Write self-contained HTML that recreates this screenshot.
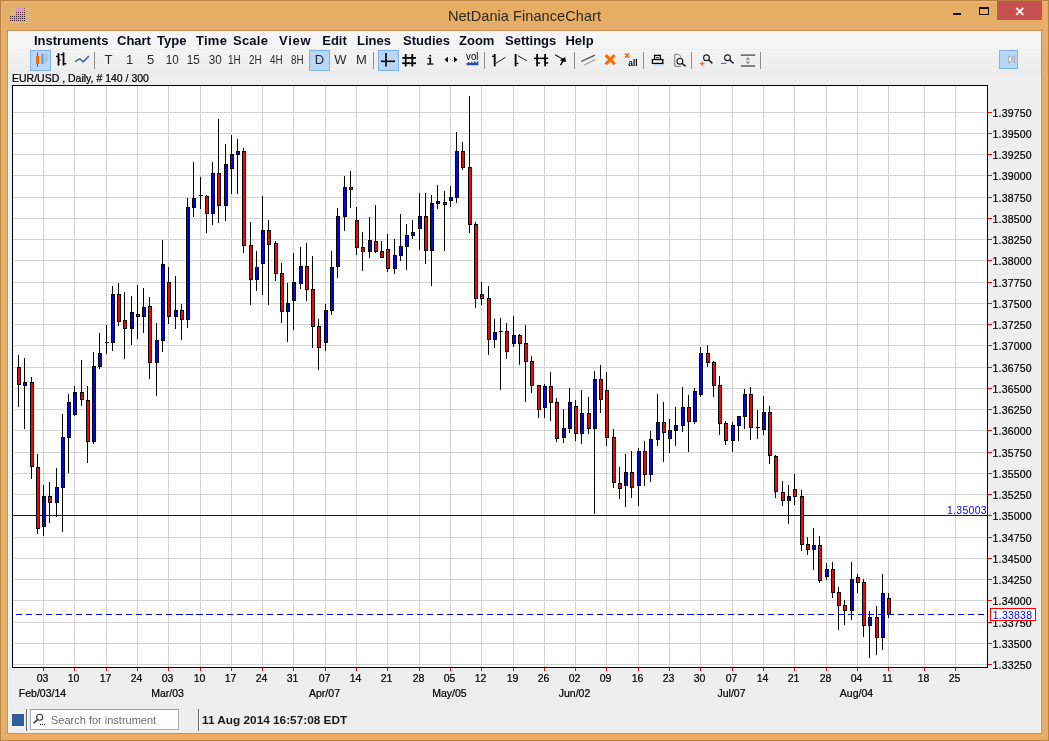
<!DOCTYPE html>
<html><head><meta charset="utf-8"><title>NetDania FinanceChart</title>
<style>
html,body{margin:0;padding:0}
body{width:1049px;height:741px;overflow:hidden;background:#E6AD64;font-family:"Liberation Sans",sans-serif;position:relative}
#win{position:absolute;left:0;top:0;width:1049px;height:741px;overflow:hidden;will-change:transform}
.fl{position:absolute}
#content{position:absolute;left:8px;top:31px;width:1033px;height:702px;background:#eeeeee}
#menubar{position:absolute;left:8px;top:31px;width:1033px;height:19px;background:#f5f5f5}
#toolbar{position:absolute;left:8px;top:50px;width:1033px;height:24px;background:linear-gradient(#f3f3f3,#ececec)}
#title{position:absolute;left:0;top:5px;letter-spacing:0.08px;width:1049px;text-align:center;font-size:14.5px;color:#2e2a22;line-height:22px;white-space:nowrap}
.mi{position:absolute;top:32px;height:17px;line-height:17px;font-size:13px;font-weight:bold;color:#0b0b1e;white-space:nowrap;text-align:center}
.mi span{display:inline-block}
.tb{position:absolute;top:50px;width:21px;height:21px;line-height:21px;text-align:center;font-size:13px;color:#2a2a2a;box-sizing:border-box;white-space:nowrap}
.tb span{display:inline-block;position:relative;top:-0.6px}
.tb .t2{left:0.5px;transform:scaleX(0.9);transform-origin:50% 50%;margin:0 -4px}
.tb .t_1H,.tb .t_2H,.tb .t_4H,.tb .t_8H{left:-1.2px;transform:scaleX(0.76)}
.sel{background:#b9d7f4;border:1px solid #7fb2e5}
.sel span{position:relative;top:-1.6px}
.sep{position:absolute;top:52px;width:1px;height:17px;background:#8a8a8a}
#clabel{position:absolute;left:12px;top:72px;font-size:10.5px;line-height:12px;color:#000;white-space:nowrap}
.pl{position:absolute;left:992.5px;width:46px;letter-spacing:0.2px;font-size:10.5px;line-height:12px;color:#000;white-space:nowrap}
.dl{position:absolute;top:672px;width:41px;text-align:center;font-size:10.5px;line-height:12px;color:#000}
.ml{position:absolute;top:687px;width:81px;text-align:center;font-size:10.5px;line-height:12px;color:#000;white-space:nowrap}
#hl{position:absolute;left:900px;width:87px;text-align:right;top:504px;letter-spacing:0.3px;font-size:10.5px;line-height:12px;color:#0000f0}
#lp{position:absolute;left:990px;top:608px;width:46px;height:13px;border:1px solid #ff0000;background:#fff;box-sizing:border-box;font-size:10.5px;line-height:12px;color:#0000f0;text-align:center;letter-spacing:0.2px;padding-right:1px}
#sq{position:absolute;left:12px;top:714px;width:12px;height:12px;background:#2f5f9e}
.ssep{position:absolute;top:709px;width:1px;height:22px;background:#666;box-shadow:1px 0 0 #fafafa}
#search{position:absolute;left:30px;top:709px;width:149px;height:21px;box-sizing:border-box;border:1px solid #abadb3;background:#fff;border-top-color:#9a9ca3}
#search span{position:absolute;left:20px;top:4px;font-size:11px;line-height:13px;color:#6e6e6e;white-space:nowrap}
#date{position:absolute;left:202px;top:713px;font-size:11.8px;font-weight:bold;line-height:14px;color:#1a1a1a;white-space:nowrap}
#closeb{position:absolute;left:997px;top:1px;width:45px;height:19px;background:#c75050}
.pl,.dl,.ml,#clabel{-webkit-text-stroke:0.22px #000}
</style></head><body>
<div id="win">
<div class="fl" style="left:0;top:0;width:1049px;height:1px;background:#b9803e"></div>
<div class="fl" style="left:0;top:1px;width:1049px;height:2px;background:#ebb275"></div>
<div class="fl" style="left:0;top:0;width:1px;height:741px;background:#b9803e"></div>
<div class="fl" style="left:1px;top:1px;width:2px;height:739px;background:#e3b274"></div>
<div class="fl" style="left:6px;top:3px;width:1px;height:735px;background:#e0b273"></div>
<div class="fl" style="left:1042px;top:3px;width:2px;height:735px;background:#f0aa5e"></div>
<div class="fl" style="left:1044px;top:3px;width:3px;height:735px;background:#e2b170"></div>
<div class="fl" style="left:0;top:0;width:1049px;height:1px;background:#b9803e"></div>
<div class="fl" style="left:1048px;top:0;width:1px;height:741px;background:#b9803e"></div>
<div class="fl" style="left:0;top:740px;width:1049px;height:1px;background:#b9803e"></div>
<div class="fl" style="left:7px;top:26px;width:1035px;height:1px;background:#dfb47c"></div>
<div class="fl" style="left:7px;top:27px;width:1035px;height:3px;background:#f3aa5d"></div>
<div class="fl" style="left:7px;top:30px;width:1035px;height:704px;background:#c4935a"></div>
<div class="fl" style="left:7px;top:734px;width:1035px;height:3px;background:#f0aa5e"></div>
<div id="title">NetDania FinanceChart</div>
<div id="closeb"></div>
<div id="content"></div>
<div class="fl" style="left:8px;top:31px;width:1px;height:702px;background:#f6f8fb"></div>
<div class="fl" style="left:1040px;top:31px;width:1px;height:702px;background:#faf8ee"></div>
<div id="menubar"></div>
<div id="toolbar"></div>
<div class="fl" style="left:9px;top:49px;width:1031px;height:1px;background:#ececec"></div>
<div class="fl" style="left:9px;top:50px;width:1031px;height:1px;background:#f6f6f6"></div>
<span class="mi" style="left:34px;width:73px"><span style="">Instruments</span></span><span class="mi" style="left:117px;width:69px"><span style="word-spacing:2.5px">Chart Type</span></span><span class="mi" style="left:196px;width:72px"><span style="word-spacing:2px;letter-spacing:0.25px">Time Scale</span></span><span class="mi" style="left:279px;width:32px"><span style="letter-spacing:0.7px">View</span></span><span class="mi" style="left:322px;width:25px"><span style="">Edit</span></span><span class="mi" style="left:357px;width:34px"><span style="">Lines</span></span><span class="mi" style="left:403px;width:46px"><span style="">Studies</span></span><span class="mi" style="left:459px;width:35px"><span style="">Zoom</span></span><span class="mi" style="left:505px;width:50px"><span style="">Settings</span></span><span class="mi" style="left:565px;width:29px"><span style="">Help</span></span>
<div class="tb sel" style="left:30px"></div>
<div class="tb" style="left:98px"><span class="t1 t_T">T</span></div><div class="tb" style="left:119px"><span class="t1 t_1">1</span></div><div class="tb" style="left:140px"><span class="t1 t_5">5</span></div><div class="tb" style="left:161px"><span class="t2 t_10">10</span></div><div class="tb" style="left:182px"><span class="t2 t_15">15</span></div><div class="tb" style="left:204px"><span class="t2 t_30">30</span></div><div class="tb" style="left:225px"><span class="t2 t_1H">1H</span></div><div class="tb" style="left:246px"><span class="t2 t_2H">2H</span></div><div class="tb" style="left:267px"><span class="t2 t_4H">4H</span></div><div class="tb" style="left:288px"><span class="t2 t_8H">8H</span></div><div class="tb sel" style="left:309px"><span class="t1 t_D">D</span></div><div class="tb" style="left:330px"><span class="t1 t_W">W</span></div><div class="tb" style="left:351px"><span class="t1 t_M">M</span></div>
<div class="tb sel" style="left:378px"></div>
<div class="tb sel" style="left:999px;width:19px;height:19px"></div>
<div class="sep" style="left:94px"></div><div class="sep" style="left:373px"></div><div class="sep" style="left:484px"></div><div class="sep" style="left:574px"></div><div class="sep" style="left:643px"></div><div class="sep" style="left:691px"></div><div class="sep" style="left:760px"></div>
<div id="clabel">EUR/USD , Daily, # 140 / 300</div>
<svg id="chart" width="1049" height="741" viewBox="0 0 1049 741" shape-rendering="crispEdges" style="position:absolute;left:0;top:0"><rect x="12" y="85" width="976" height="583" fill="#fff"/><rect x="43" y="86" width="1" height="581" fill="#d3d3d3"/><rect x="74" y="86" width="1" height="581" fill="#d3d3d3"/><rect x="106" y="86" width="1" height="581" fill="#d3d3d3"/><rect x="137" y="86" width="1" height="581" fill="#d3d3d3"/><rect x="168" y="86" width="1" height="581" fill="#d3d3d3"/><rect x="200" y="86" width="1" height="581" fill="#d3d3d3"/><rect x="231" y="86" width="1" height="581" fill="#d3d3d3"/><rect x="262" y="86" width="1" height="581" fill="#d3d3d3"/><rect x="293" y="86" width="1" height="581" fill="#d3d3d3"/><rect x="325" y="86" width="1" height="581" fill="#d3d3d3"/><rect x="356" y="86" width="1" height="581" fill="#d3d3d3"/><rect x="387" y="86" width="1" height="581" fill="#d3d3d3"/><rect x="419" y="86" width="1" height="581" fill="#d3d3d3"/><rect x="450" y="86" width="1" height="581" fill="#d3d3d3"/><rect x="481" y="86" width="1" height="581" fill="#d3d3d3"/><rect x="513" y="86" width="1" height="581" fill="#d3d3d3"/><rect x="544" y="86" width="1" height="581" fill="#d3d3d3"/><rect x="575" y="86" width="1" height="581" fill="#d3d3d3"/><rect x="606" y="86" width="1" height="581" fill="#d3d3d3"/><rect x="638" y="86" width="1" height="581" fill="#d3d3d3"/><rect x="669" y="86" width="1" height="581" fill="#d3d3d3"/><rect x="700" y="86" width="1" height="581" fill="#d3d3d3"/><rect x="732" y="86" width="1" height="581" fill="#d3d3d3"/><rect x="763" y="86" width="1" height="581" fill="#d3d3d3"/><rect x="794" y="86" width="1" height="581" fill="#d3d3d3"/><rect x="826" y="86" width="1" height="581" fill="#d3d3d3"/><rect x="857" y="86" width="1" height="581" fill="#d3d3d3"/><rect x="888" y="86" width="1" height="581" fill="#d3d3d3"/><rect x="924" y="86" width="1" height="581" fill="#d3d3d3"/><rect x="955" y="86" width="1" height="581" fill="#d3d3d3"/><rect x="13" y="112" width="974" height="1" fill="#d3d3d3"/><rect x="13" y="133" width="974" height="1" fill="#d3d3d3"/><rect x="13" y="154" width="974" height="1" fill="#d3d3d3"/><rect x="13" y="175" width="974" height="1" fill="#d3d3d3"/><rect x="13" y="197" width="974" height="1" fill="#d3d3d3"/><rect x="13" y="218" width="974" height="1" fill="#d3d3d3"/><rect x="13" y="239" width="974" height="1" fill="#d3d3d3"/><rect x="13" y="260" width="974" height="1" fill="#d3d3d3"/><rect x="13" y="282" width="974" height="1" fill="#d3d3d3"/><rect x="13" y="303" width="974" height="1" fill="#d3d3d3"/><rect x="13" y="324" width="974" height="1" fill="#d3d3d3"/><rect x="13" y="345" width="974" height="1" fill="#d3d3d3"/><rect x="13" y="367" width="974" height="1" fill="#d3d3d3"/><rect x="13" y="388" width="974" height="1" fill="#d3d3d3"/><rect x="13" y="409" width="974" height="1" fill="#d3d3d3"/><rect x="13" y="430" width="974" height="1" fill="#d3d3d3"/><rect x="13" y="452" width="974" height="1" fill="#d3d3d3"/><rect x="13" y="473" width="974" height="1" fill="#d3d3d3"/><rect x="13" y="494" width="974" height="1" fill="#d3d3d3"/><rect x="13" y="515" width="974" height="1" fill="#d3d3d3"/><rect x="13" y="537" width="974" height="1" fill="#d3d3d3"/><rect x="13" y="558" width="974" height="1" fill="#d3d3d3"/><rect x="13" y="579" width="974" height="1" fill="#d3d3d3"/><rect x="13" y="600" width="974" height="1" fill="#d3d3d3"/><rect x="13" y="622" width="974" height="1" fill="#d3d3d3"/><rect x="13" y="643" width="974" height="1" fill="#d3d3d3"/><rect x="13" y="664" width="974" height="1" fill="#d3d3d3"/><rect x="13" y="515" width="974" height="1" fill="#0000f0"/><rect x="18" y="355" width="1" height="52" fill="#000"/><rect x="17" y="367" width="4" height="18" fill="#000"/><rect x="18" y="368" width="2" height="16" fill="#ff0000"/><rect x="24" y="358" width="1" height="71" fill="#000"/><rect x="23" y="382" width="4" height="4" fill="#000"/><rect x="24" y="383" width="2" height="2" fill="#0000ff"/><rect x="31" y="377" width="1" height="102" fill="#000"/><rect x="30" y="382" width="4" height="85" fill="#000"/><rect x="31" y="383" width="2" height="83" fill="#ff0000"/><rect x="37" y="454" width="1" height="80" fill="#000"/><rect x="36" y="467" width="4" height="62" fill="#000"/><rect x="37" y="468" width="2" height="60" fill="#ff0000"/><rect x="43" y="485" width="1" height="51" fill="#000"/><rect x="42" y="496" width="4" height="31" fill="#000"/><rect x="43" y="497" width="2" height="29" fill="#0000ff"/><rect x="49" y="482" width="1" height="41" fill="#000"/><rect x="48" y="496" width="4" height="7" fill="#000"/><rect x="49" y="497" width="2" height="5" fill="#ff0000"/><rect x="56" y="468" width="1" height="49" fill="#000"/><rect x="55" y="487" width="4" height="16" fill="#000"/><rect x="56" y="488" width="2" height="14" fill="#0000ff"/><rect x="62" y="414" width="1" height="118" fill="#000"/><rect x="61" y="437" width="4" height="51" fill="#000"/><rect x="62" y="438" width="2" height="49" fill="#0000ff"/><rect x="68" y="394" width="1" height="79" fill="#000"/><rect x="67" y="402" width="4" height="36" fill="#000"/><rect x="68" y="403" width="2" height="34" fill="#0000ff"/><rect x="74" y="386" width="1" height="30" fill="#000"/><rect x="73" y="392" width="4" height="23" fill="#000"/><rect x="74" y="393" width="2" height="21" fill="#0000ff"/><rect x="81" y="360" width="1" height="46" fill="#000"/><rect x="80" y="392" width="4" height="8" fill="#000"/><rect x="81" y="393" width="2" height="6" fill="#ff0000"/><rect x="87" y="386" width="1" height="77" fill="#000"/><rect x="86" y="400" width="4" height="42" fill="#000"/><rect x="87" y="401" width="2" height="40" fill="#ff0000"/><rect x="93" y="352" width="1" height="92" fill="#000"/><rect x="92" y="366" width="4" height="76" fill="#000"/><rect x="93" y="367" width="2" height="74" fill="#0000ff"/><rect x="99" y="333" width="1" height="36" fill="#000"/><rect x="98" y="353" width="4" height="14" fill="#000"/><rect x="99" y="354" width="2" height="12" fill="#0000ff"/><rect x="106" y="325" width="1" height="29" fill="#000"/><rect x="105" y="342" width="4" height="1" fill="#000"/><rect x="112" y="286" width="1" height="65" fill="#000"/><rect x="111" y="294" width="4" height="49" fill="#000"/><rect x="112" y="295" width="2" height="47" fill="#0000ff"/><rect x="118" y="283" width="1" height="43" fill="#000"/><rect x="117" y="294" width="4" height="28" fill="#000"/><rect x="118" y="295" width="2" height="26" fill="#ff0000"/><rect x="124" y="292" width="1" height="67" fill="#000"/><rect x="123" y="320" width="4" height="9" fill="#000"/><rect x="124" y="321" width="2" height="7" fill="#ff0000"/><rect x="131" y="296" width="1" height="49" fill="#000"/><rect x="130" y="312" width="4" height="17" fill="#000"/><rect x="131" y="313" width="2" height="15" fill="#0000ff"/><rect x="137" y="285" width="1" height="54" fill="#000"/><rect x="136" y="314" width="4" height="3" fill="#000"/><rect x="137" y="315" width="2" height="1" fill="#ff0000"/><rect x="143" y="288" width="1" height="45" fill="#000"/><rect x="142" y="307" width="4" height="10" fill="#000"/><rect x="143" y="308" width="2" height="8" fill="#0000ff"/><rect x="149" y="297" width="1" height="82" fill="#000"/><rect x="148" y="306" width="4" height="57" fill="#000"/><rect x="149" y="307" width="2" height="55" fill="#ff0000"/><rect x="156" y="323" width="1" height="73" fill="#000"/><rect x="155" y="340" width="4" height="23" fill="#000"/><rect x="156" y="341" width="2" height="21" fill="#0000ff"/><rect x="162" y="240" width="1" height="112" fill="#000"/><rect x="161" y="264" width="4" height="77" fill="#000"/><rect x="162" y="265" width="2" height="75" fill="#0000ff"/><rect x="168" y="267" width="1" height="57" fill="#000"/><rect x="167" y="282" width="4" height="35" fill="#000"/><rect x="168" y="283" width="2" height="33" fill="#ff0000"/><rect x="175" y="276" width="1" height="53" fill="#000"/><rect x="174" y="310" width="4" height="7" fill="#000"/><rect x="175" y="311" width="2" height="5" fill="#0000ff"/><rect x="181" y="304" width="1" height="36" fill="#000"/><rect x="180" y="310" width="4" height="10" fill="#000"/><rect x="181" y="311" width="2" height="8" fill="#ff0000"/><rect x="187" y="198" width="1" height="130" fill="#000"/><rect x="186" y="207" width="4" height="113" fill="#000"/><rect x="187" y="208" width="2" height="111" fill="#0000ff"/><rect x="193" y="162" width="1" height="55" fill="#000"/><rect x="192" y="198" width="4" height="10" fill="#000"/><rect x="193" y="199" width="2" height="8" fill="#0000ff"/><rect x="200" y="177" width="1" height="32" fill="#000"/><rect x="199" y="195" width="4" height="1" fill="#000"/><rect x="206" y="195" width="1" height="38" fill="#000"/><rect x="205" y="196" width="4" height="18" fill="#000"/><rect x="206" y="197" width="2" height="16" fill="#ff0000"/><rect x="212" y="162" width="1" height="63" fill="#000"/><rect x="211" y="173" width="4" height="41" fill="#000"/><rect x="212" y="174" width="2" height="39" fill="#0000ff"/><rect x="218" y="119" width="1" height="104" fill="#000"/><rect x="217" y="173" width="4" height="33" fill="#000"/><rect x="218" y="174" width="2" height="31" fill="#ff0000"/><rect x="225" y="144" width="1" height="77" fill="#000"/><rect x="224" y="164" width="4" height="42" fill="#000"/><rect x="225" y="165" width="2" height="40" fill="#0000ff"/><rect x="231" y="135" width="1" height="59" fill="#000"/><rect x="230" y="154" width="4" height="15" fill="#000"/><rect x="231" y="155" width="2" height="13" fill="#0000ff"/><rect x="237" y="139" width="1" height="55" fill="#000"/><rect x="236" y="151" width="4" height="4" fill="#000"/><rect x="237" y="152" width="2" height="2" fill="#0000ff"/><rect x="243" y="148" width="1" height="105" fill="#000"/><rect x="242" y="151" width="4" height="95" fill="#000"/><rect x="243" y="152" width="2" height="93" fill="#ff0000"/><rect x="250" y="222" width="1" height="83" fill="#000"/><rect x="249" y="245" width="4" height="35" fill="#000"/><rect x="250" y="246" width="2" height="33" fill="#ff0000"/><rect x="256" y="251" width="1" height="40" fill="#000"/><rect x="255" y="267" width="4" height="13" fill="#000"/><rect x="256" y="268" width="2" height="11" fill="#0000ff"/><rect x="262" y="196" width="1" height="99" fill="#000"/><rect x="261" y="230" width="4" height="34" fill="#000"/><rect x="262" y="231" width="2" height="32" fill="#0000ff"/><rect x="268" y="220" width="1" height="85" fill="#000"/><rect x="267" y="230" width="4" height="15" fill="#000"/><rect x="268" y="231" width="2" height="13" fill="#ff0000"/><rect x="275" y="241" width="1" height="40" fill="#000"/><rect x="274" y="243" width="4" height="31" fill="#000"/><rect x="275" y="244" width="2" height="29" fill="#ff0000"/><rect x="281" y="263" width="1" height="60" fill="#000"/><rect x="280" y="273" width="4" height="39" fill="#000"/><rect x="281" y="274" width="2" height="37" fill="#ff0000"/><rect x="287" y="283" width="1" height="59" fill="#000"/><rect x="286" y="303" width="4" height="9" fill="#000"/><rect x="287" y="304" width="2" height="7" fill="#0000ff"/><rect x="293" y="253" width="1" height="77" fill="#000"/><rect x="292" y="282" width="4" height="19" fill="#000"/><rect x="293" y="283" width="2" height="17" fill="#0000ff"/><rect x="300" y="247" width="1" height="42" fill="#000"/><rect x="299" y="266" width="4" height="18" fill="#000"/><rect x="300" y="267" width="2" height="16" fill="#0000ff"/><rect x="306" y="243" width="1" height="58" fill="#000"/><rect x="305" y="266" width="4" height="24" fill="#000"/><rect x="306" y="267" width="2" height="22" fill="#ff0000"/><rect x="312" y="256" width="1" height="92" fill="#000"/><rect x="311" y="289" width="4" height="38" fill="#000"/><rect x="312" y="290" width="2" height="36" fill="#ff0000"/><rect x="318" y="319" width="1" height="51" fill="#000"/><rect x="317" y="326" width="4" height="22" fill="#000"/><rect x="318" y="327" width="2" height="20" fill="#ff0000"/><rect x="325" y="304" width="1" height="47" fill="#000"/><rect x="324" y="310" width="4" height="33" fill="#000"/><rect x="325" y="311" width="2" height="31" fill="#0000ff"/><rect x="331" y="251" width="1" height="64" fill="#000"/><rect x="330" y="267" width="4" height="44" fill="#000"/><rect x="331" y="268" width="2" height="42" fill="#0000ff"/><rect x="337" y="208" width="1" height="70" fill="#000"/><rect x="336" y="216" width="4" height="51" fill="#000"/><rect x="337" y="217" width="2" height="49" fill="#0000ff"/><rect x="344" y="176" width="1" height="55" fill="#000"/><rect x="343" y="187" width="4" height="30" fill="#000"/><rect x="344" y="188" width="2" height="28" fill="#0000ff"/><rect x="350" y="171" width="1" height="37" fill="#000"/><rect x="349" y="187" width="4" height="3" fill="#000"/><rect x="350" y="188" width="2" height="1" fill="#ff0000"/><rect x="356" y="207" width="1" height="48" fill="#000"/><rect x="355" y="220" width="4" height="28" fill="#000"/><rect x="356" y="221" width="2" height="26" fill="#ff0000"/><rect x="362" y="232" width="1" height="39" fill="#000"/><rect x="361" y="247" width="4" height="5" fill="#000"/><rect x="362" y="248" width="2" height="3" fill="#ff0000"/><rect x="369" y="217" width="1" height="41" fill="#000"/><rect x="368" y="240" width="4" height="12" fill="#000"/><rect x="369" y="241" width="2" height="10" fill="#0000ff"/><rect x="375" y="205" width="1" height="48" fill="#000"/><rect x="374" y="241" width="4" height="11" fill="#000"/><rect x="375" y="242" width="2" height="9" fill="#ff0000"/><rect x="381" y="241" width="1" height="17" fill="#000"/><rect x="380" y="251" width="4" height="7" fill="#000"/><rect x="381" y="252" width="2" height="5" fill="#ff0000"/><rect x="387" y="234" width="1" height="38" fill="#000"/><rect x="386" y="249" width="4" height="20" fill="#000"/><rect x="387" y="250" width="2" height="18" fill="#ff0000"/><rect x="394" y="239" width="1" height="35" fill="#000"/><rect x="393" y="255" width="4" height="14" fill="#000"/><rect x="394" y="256" width="2" height="12" fill="#0000ff"/><rect x="400" y="214" width="1" height="47" fill="#000"/><rect x="399" y="246" width="4" height="10" fill="#000"/><rect x="400" y="247" width="2" height="8" fill="#0000ff"/><rect x="406" y="224" width="1" height="46" fill="#000"/><rect x="405" y="235" width="4" height="12" fill="#000"/><rect x="406" y="236" width="2" height="10" fill="#0000ff"/><rect x="412" y="220" width="1" height="19" fill="#000"/><rect x="411" y="232" width="4" height="4" fill="#000"/><rect x="412" y="233" width="2" height="2" fill="#0000ff"/><rect x="419" y="193" width="1" height="57" fill="#000"/><rect x="418" y="216" width="4" height="13" fill="#000"/><rect x="419" y="217" width="2" height="11" fill="#0000ff"/><rect x="425" y="193" width="1" height="71" fill="#000"/><rect x="424" y="216" width="4" height="35" fill="#000"/><rect x="425" y="217" width="2" height="33" fill="#ff0000"/><rect x="431" y="195" width="1" height="91" fill="#000"/><rect x="430" y="203" width="4" height="48" fill="#000"/><rect x="431" y="204" width="2" height="46" fill="#0000ff"/><rect x="437" y="185" width="1" height="24" fill="#000"/><rect x="436" y="201" width="4" height="3" fill="#000"/><rect x="437" y="202" width="2" height="1" fill="#0000ff"/><rect x="444" y="191" width="1" height="60" fill="#000"/><rect x="443" y="202" width="4" height="3" fill="#000"/><rect x="444" y="203" width="2" height="1" fill="#ff0000"/><rect x="450" y="186" width="1" height="21" fill="#000"/><rect x="449" y="197" width="4" height="4" fill="#000"/><rect x="450" y="198" width="2" height="2" fill="#0000ff"/><rect x="456" y="132" width="1" height="71" fill="#000"/><rect x="455" y="151" width="4" height="47" fill="#000"/><rect x="456" y="152" width="2" height="45" fill="#0000ff"/><rect x="462" y="142" width="1" height="28" fill="#000"/><rect x="461" y="151" width="4" height="17" fill="#000"/><rect x="462" y="152" width="2" height="15" fill="#ff0000"/><rect x="469" y="96" width="1" height="137" fill="#000"/><rect x="468" y="167" width="4" height="58" fill="#000"/><rect x="469" y="168" width="2" height="56" fill="#ff0000"/><rect x="475" y="222" width="1" height="86" fill="#000"/><rect x="474" y="224" width="4" height="75" fill="#000"/><rect x="475" y="225" width="2" height="73" fill="#ff0000"/><rect x="481" y="282" width="1" height="23" fill="#000"/><rect x="480" y="294" width="4" height="5" fill="#000"/><rect x="481" y="295" width="2" height="3" fill="#ff0000"/><rect x="488" y="286" width="1" height="69" fill="#000"/><rect x="487" y="298" width="4" height="42" fill="#000"/><rect x="488" y="299" width="2" height="40" fill="#ff0000"/><rect x="494" y="319" width="1" height="29" fill="#000"/><rect x="493" y="332" width="4" height="8" fill="#000"/><rect x="494" y="333" width="2" height="6" fill="#0000ff"/><rect x="500" y="318" width="1" height="72" fill="#000"/><rect x="499" y="331" width="4" height="1" fill="#000"/><rect x="506" y="323" width="1" height="36" fill="#000"/><rect x="505" y="331" width="4" height="21" fill="#000"/><rect x="506" y="332" width="2" height="19" fill="#ff0000"/><rect x="513" y="316" width="1" height="31" fill="#000"/><rect x="512" y="335" width="4" height="9" fill="#000"/><rect x="513" y="336" width="2" height="7" fill="#0000ff"/><rect x="519" y="334" width="1" height="31" fill="#000"/><rect x="518" y="335" width="4" height="9" fill="#000"/><rect x="519" y="336" width="2" height="7" fill="#ff0000"/><rect x="525" y="325" width="1" height="77" fill="#000"/><rect x="524" y="343" width="4" height="19" fill="#000"/><rect x="525" y="344" width="2" height="17" fill="#ff0000"/><rect x="531" y="356" width="1" height="37" fill="#000"/><rect x="530" y="361" width="4" height="25" fill="#000"/><rect x="531" y="362" width="2" height="23" fill="#ff0000"/><rect x="538" y="385" width="1" height="33" fill="#000"/><rect x="537" y="385" width="4" height="25" fill="#000"/><rect x="538" y="386" width="2" height="23" fill="#ff0000"/><rect x="544" y="384" width="1" height="34" fill="#000"/><rect x="543" y="386" width="4" height="22" fill="#000"/><rect x="544" y="387" width="2" height="20" fill="#0000ff"/><rect x="550" y="372" width="1" height="49" fill="#000"/><rect x="549" y="386" width="4" height="17" fill="#000"/><rect x="550" y="387" width="2" height="15" fill="#ff0000"/><rect x="556" y="398" width="1" height="44" fill="#000"/><rect x="555" y="402" width="4" height="37" fill="#000"/><rect x="556" y="403" width="2" height="35" fill="#ff0000"/><rect x="563" y="409" width="1" height="34" fill="#000"/><rect x="562" y="428" width="4" height="10" fill="#000"/><rect x="563" y="429" width="2" height="8" fill="#0000ff"/><rect x="569" y="388" width="1" height="45" fill="#000"/><rect x="568" y="402" width="4" height="27" fill="#000"/><rect x="569" y="403" width="2" height="25" fill="#0000ff"/><rect x="575" y="400" width="1" height="41" fill="#000"/><rect x="574" y="406" width="4" height="28" fill="#000"/><rect x="575" y="407" width="2" height="26" fill="#ff0000"/><rect x="581" y="390" width="1" height="54" fill="#000"/><rect x="580" y="413" width="4" height="21" fill="#000"/><rect x="581" y="414" width="2" height="19" fill="#0000ff"/><rect x="588" y="397" width="1" height="37" fill="#000"/><rect x="587" y="413" width="4" height="16" fill="#000"/><rect x="588" y="414" width="2" height="14" fill="#ff0000"/><rect x="594" y="371" width="1" height="143" fill="#000"/><rect x="593" y="379" width="4" height="50" fill="#000"/><rect x="594" y="380" width="2" height="48" fill="#0000ff"/><rect x="600" y="365" width="1" height="48" fill="#000"/><rect x="599" y="379" width="4" height="21" fill="#000"/><rect x="600" y="380" width="2" height="19" fill="#ff0000"/><rect x="606" y="372" width="1" height="74" fill="#000"/><rect x="605" y="390" width="4" height="48" fill="#000"/><rect x="606" y="391" width="2" height="46" fill="#ff0000"/><rect x="613" y="429" width="1" height="59" fill="#000"/><rect x="612" y="437" width="4" height="46" fill="#000"/><rect x="613" y="438" width="2" height="44" fill="#ff0000"/><rect x="619" y="467" width="1" height="32" fill="#000"/><rect x="618" y="483" width="4" height="6" fill="#000"/><rect x="619" y="484" width="2" height="4" fill="#ff0000"/><rect x="625" y="454" width="1" height="53" fill="#000"/><rect x="624" y="472" width="4" height="14" fill="#000"/><rect x="625" y="473" width="2" height="12" fill="#0000ff"/><rect x="631" y="451" width="1" height="47" fill="#000"/><rect x="630" y="472" width="4" height="16" fill="#000"/><rect x="631" y="473" width="2" height="14" fill="#ff0000"/><rect x="638" y="448" width="1" height="58" fill="#000"/><rect x="637" y="451" width="4" height="35" fill="#000"/><rect x="638" y="452" width="2" height="33" fill="#0000ff"/><rect x="644" y="441" width="1" height="45" fill="#000"/><rect x="643" y="451" width="4" height="24" fill="#000"/><rect x="644" y="452" width="2" height="22" fill="#ff0000"/><rect x="650" y="431" width="1" height="51" fill="#000"/><rect x="649" y="439" width="4" height="36" fill="#000"/><rect x="650" y="440" width="2" height="34" fill="#0000ff"/><rect x="657" y="394" width="1" height="52" fill="#000"/><rect x="656" y="422" width="4" height="18" fill="#000"/><rect x="657" y="423" width="2" height="16" fill="#0000ff"/><rect x="663" y="402" width="1" height="60" fill="#000"/><rect x="662" y="422" width="4" height="11" fill="#000"/><rect x="663" y="423" width="2" height="9" fill="#ff0000"/><rect x="669" y="419" width="1" height="34" fill="#000"/><rect x="668" y="430" width="4" height="9" fill="#000"/><rect x="669" y="431" width="2" height="7" fill="#0000ff"/><rect x="675" y="407" width="1" height="39" fill="#000"/><rect x="674" y="425" width="4" height="6" fill="#000"/><rect x="675" y="426" width="2" height="4" fill="#0000ff"/><rect x="682" y="387" width="1" height="45" fill="#000"/><rect x="681" y="407" width="4" height="19" fill="#000"/><rect x="682" y="408" width="2" height="17" fill="#0000ff"/><rect x="688" y="395" width="1" height="57" fill="#000"/><rect x="687" y="407" width="4" height="15" fill="#000"/><rect x="688" y="408" width="2" height="13" fill="#ff0000"/><rect x="694" y="388" width="1" height="36" fill="#000"/><rect x="693" y="391" width="4" height="31" fill="#000"/><rect x="694" y="392" width="2" height="29" fill="#0000ff"/><rect x="700" y="347" width="1" height="50" fill="#000"/><rect x="699" y="353" width="4" height="42" fill="#000"/><rect x="700" y="354" width="2" height="40" fill="#0000ff"/><rect x="707" y="345" width="1" height="22" fill="#000"/><rect x="706" y="353" width="4" height="10" fill="#000"/><rect x="707" y="354" width="2" height="8" fill="#ff0000"/><rect x="713" y="361" width="1" height="36" fill="#000"/><rect x="712" y="362" width="4" height="24" fill="#000"/><rect x="713" y="363" width="2" height="22" fill="#ff0000"/><rect x="719" y="376" width="1" height="59" fill="#000"/><rect x="718" y="385" width="4" height="39" fill="#000"/><rect x="719" y="386" width="2" height="37" fill="#ff0000"/><rect x="725" y="421" width="1" height="24" fill="#000"/><rect x="724" y="423" width="4" height="18" fill="#000"/><rect x="725" y="424" width="2" height="16" fill="#ff0000"/><rect x="732" y="422" width="1" height="30" fill="#000"/><rect x="731" y="425" width="4" height="16" fill="#000"/><rect x="732" y="426" width="2" height="14" fill="#0000ff"/><rect x="738" y="416" width="1" height="25" fill="#000"/><rect x="737" y="416" width="4" height="10" fill="#000"/><rect x="738" y="417" width="2" height="8" fill="#0000ff"/><rect x="744" y="389" width="1" height="40" fill="#000"/><rect x="743" y="394" width="4" height="23" fill="#000"/><rect x="744" y="395" width="2" height="21" fill="#0000ff"/><rect x="750" y="387" width="1" height="53" fill="#000"/><rect x="749" y="394" width="4" height="34" fill="#000"/><rect x="750" y="395" width="2" height="32" fill="#ff0000"/><rect x="757" y="410" width="1" height="29" fill="#000"/><rect x="756" y="427" width="4" height="1" fill="#000"/><rect x="763" y="396" width="1" height="39" fill="#000"/><rect x="762" y="412" width="4" height="18" fill="#000"/><rect x="763" y="413" width="2" height="16" fill="#0000ff"/><rect x="769" y="406" width="1" height="58" fill="#000"/><rect x="768" y="412" width="4" height="44" fill="#000"/><rect x="769" y="413" width="2" height="42" fill="#ff0000"/><rect x="775" y="455" width="1" height="43" fill="#000"/><rect x="774" y="456" width="4" height="36" fill="#000"/><rect x="775" y="457" width="2" height="34" fill="#ff0000"/><rect x="782" y="481" width="1" height="25" fill="#000"/><rect x="781" y="492" width="4" height="9" fill="#000"/><rect x="782" y="493" width="2" height="7" fill="#ff0000"/><rect x="788" y="485" width="1" height="39" fill="#000"/><rect x="787" y="496" width="4" height="5" fill="#000"/><rect x="788" y="497" width="2" height="3" fill="#0000ff"/><rect x="794" y="474" width="1" height="31" fill="#000"/><rect x="793" y="489" width="4" height="8" fill="#000"/><rect x="794" y="490" width="2" height="6" fill="#ff0000"/><rect x="801" y="490" width="1" height="61" fill="#000"/><rect x="800" y="496" width="4" height="49" fill="#000"/><rect x="801" y="497" width="2" height="47" fill="#ff0000"/><rect x="807" y="537" width="1" height="18" fill="#000"/><rect x="806" y="544" width="4" height="6" fill="#000"/><rect x="807" y="545" width="2" height="4" fill="#ff0000"/><rect x="813" y="528" width="1" height="42" fill="#000"/><rect x="812" y="545" width="4" height="5" fill="#000"/><rect x="813" y="546" width="2" height="3" fill="#0000ff"/><rect x="819" y="536" width="1" height="47" fill="#000"/><rect x="818" y="545" width="4" height="36" fill="#000"/><rect x="819" y="546" width="2" height="34" fill="#ff0000"/><rect x="826" y="563" width="1" height="17" fill="#000"/><rect x="825" y="569" width="4" height="8" fill="#000"/><rect x="826" y="570" width="2" height="6" fill="#0000ff"/><rect x="832" y="562" width="1" height="36" fill="#000"/><rect x="831" y="569" width="4" height="24" fill="#000"/><rect x="832" y="570" width="2" height="22" fill="#ff0000"/><rect x="838" y="587" width="1" height="43" fill="#000"/><rect x="837" y="592" width="4" height="14" fill="#000"/><rect x="838" y="593" width="2" height="12" fill="#ff0000"/><rect x="844" y="600" width="1" height="25" fill="#000"/><rect x="843" y="605" width="4" height="6" fill="#000"/><rect x="844" y="606" width="2" height="4" fill="#ff0000"/><rect x="851" y="562" width="1" height="58" fill="#000"/><rect x="850" y="579" width="4" height="32" fill="#000"/><rect x="851" y="580" width="2" height="30" fill="#0000ff"/><rect x="857" y="574" width="1" height="19" fill="#000"/><rect x="856" y="577" width="4" height="6" fill="#000"/><rect x="857" y="578" width="2" height="4" fill="#ff0000"/><rect x="863" y="579" width="1" height="58" fill="#000"/><rect x="862" y="582" width="4" height="44" fill="#000"/><rect x="863" y="583" width="2" height="42" fill="#ff0000"/><rect x="869" y="611" width="1" height="47" fill="#000"/><rect x="868" y="617" width="4" height="9" fill="#000"/><rect x="869" y="618" width="2" height="7" fill="#0000ff"/><rect x="876" y="606" width="1" height="49" fill="#000"/><rect x="875" y="617" width="4" height="21" fill="#000"/><rect x="876" y="618" width="2" height="19" fill="#ff0000"/><rect x="882" y="574" width="1" height="76" fill="#000"/><rect x="881" y="593" width="4" height="45" fill="#000"/><rect x="882" y="594" width="2" height="43" fill="#0000ff"/><rect x="888" y="593" width="1" height="25" fill="#000"/><rect x="887" y="598" width="4" height="17" fill="#000"/><rect x="888" y="599" width="2" height="15" fill="#ff0000"/><rect x="16" y="614" width="6" height="1" fill="#0000f0"/><rect x="26" y="614" width="6" height="1" fill="#0000f0"/><rect x="36" y="614" width="6" height="1" fill="#0000f0"/><rect x="46" y="614" width="6" height="1" fill="#0000f0"/><rect x="56" y="614" width="6" height="1" fill="#0000f0"/><rect x="66" y="614" width="6" height="1" fill="#0000f0"/><rect x="76" y="614" width="6" height="1" fill="#0000f0"/><rect x="86" y="614" width="6" height="1" fill="#0000f0"/><rect x="96" y="614" width="6" height="1" fill="#0000f0"/><rect x="106" y="614" width="6" height="1" fill="#0000f0"/><rect x="116" y="614" width="6" height="1" fill="#0000f0"/><rect x="126" y="614" width="6" height="1" fill="#0000f0"/><rect x="136" y="614" width="6" height="1" fill="#0000f0"/><rect x="146" y="614" width="6" height="1" fill="#0000f0"/><rect x="156" y="614" width="6" height="1" fill="#0000f0"/><rect x="166" y="614" width="6" height="1" fill="#0000f0"/><rect x="176" y="614" width="7" height="1" fill="#0000f0"/><rect x="186" y="614" width="7" height="1" fill="#0000f0"/><rect x="196" y="614" width="7" height="1" fill="#0000f0"/><rect x="206" y="614" width="7" height="1" fill="#0000f0"/><rect x="217" y="614" width="6" height="1" fill="#0000f0"/><rect x="227" y="614" width="6" height="1" fill="#0000f0"/><rect x="237" y="614" width="6" height="1" fill="#0000f0"/><rect x="247" y="614" width="6" height="1" fill="#0000f0"/><rect x="257" y="614" width="6" height="1" fill="#0000f0"/><rect x="267" y="614" width="6" height="1" fill="#0000f0"/><rect x="277" y="614" width="6" height="1" fill="#0000f0"/><rect x="287" y="614" width="6" height="1" fill="#0000f0"/><rect x="297" y="614" width="6" height="1" fill="#0000f0"/><rect x="307" y="614" width="6" height="1" fill="#0000f0"/><rect x="317" y="614" width="6" height="1" fill="#0000f0"/><rect x="327" y="614" width="6" height="1" fill="#0000f0"/><rect x="337" y="614" width="6" height="1" fill="#0000f0"/><rect x="347" y="614" width="6" height="1" fill="#0000f0"/><rect x="357" y="614" width="6" height="1" fill="#0000f0"/><rect x="367" y="614" width="6" height="1" fill="#0000f0"/><rect x="377" y="614" width="6" height="1" fill="#0000f0"/><rect x="387" y="614" width="6" height="1" fill="#0000f0"/><rect x="397" y="614" width="6" height="1" fill="#0000f0"/><rect x="407" y="614" width="6" height="1" fill="#0000f0"/><rect x="417" y="614" width="6" height="1" fill="#0000f0"/><rect x="427" y="614" width="6" height="1" fill="#0000f0"/><rect x="437" y="614" width="6" height="1" fill="#0000f0"/><rect x="447" y="614" width="6" height="1" fill="#0000f0"/><rect x="457" y="614" width="6" height="1" fill="#0000f0"/><rect x="467" y="614" width="6" height="1" fill="#0000f0"/><rect x="477" y="614" width="6" height="1" fill="#0000f0"/><rect x="487" y="614" width="6" height="1" fill="#0000f0"/><rect x="497" y="614" width="6" height="1" fill="#0000f0"/><rect x="507" y="614" width="6" height="1" fill="#0000f0"/><rect x="517" y="614" width="6" height="1" fill="#0000f0"/><rect x="527" y="614" width="6" height="1" fill="#0000f0"/><rect x="537" y="614" width="6" height="1" fill="#0000f0"/><rect x="547" y="614" width="6" height="1" fill="#0000f0"/><rect x="557" y="614" width="6" height="1" fill="#0000f0"/><rect x="567" y="614" width="6" height="1" fill="#0000f0"/><rect x="577" y="614" width="6" height="1" fill="#0000f0"/><rect x="587" y="614" width="6" height="1" fill="#0000f0"/><rect x="597" y="614" width="6" height="1" fill="#0000f0"/><rect x="607" y="614" width="6" height="1" fill="#0000f0"/><rect x="617" y="614" width="6" height="1" fill="#0000f0"/><rect x="627" y="614" width="6" height="1" fill="#0000f0"/><rect x="637" y="614" width="6" height="1" fill="#0000f0"/><rect x="647" y="614" width="6" height="1" fill="#0000f0"/><rect x="657" y="614" width="6" height="1" fill="#0000f0"/><rect x="667" y="614" width="6" height="1" fill="#0000f0"/><rect x="677" y="614" width="7" height="1" fill="#0000f0"/><rect x="687" y="614" width="7" height="1" fill="#0000f0"/><rect x="697" y="614" width="7" height="1" fill="#0000f0"/><rect x="707" y="614" width="7" height="1" fill="#0000f0"/><rect x="717" y="614" width="7" height="1" fill="#0000f0"/><rect x="728" y="614" width="6" height="1" fill="#0000f0"/><rect x="738" y="614" width="6" height="1" fill="#0000f0"/><rect x="748" y="614" width="6" height="1" fill="#0000f0"/><rect x="758" y="614" width="6" height="1" fill="#0000f0"/><rect x="768" y="614" width="6" height="1" fill="#0000f0"/><rect x="778" y="614" width="6" height="1" fill="#0000f0"/><rect x="788" y="614" width="6" height="1" fill="#0000f0"/><rect x="798" y="614" width="6" height="1" fill="#0000f0"/><rect x="808" y="614" width="6" height="1" fill="#0000f0"/><rect x="818" y="614" width="6" height="1" fill="#0000f0"/><rect x="828" y="614" width="6" height="1" fill="#0000f0"/><rect x="838" y="614" width="6" height="1" fill="#0000f0"/><rect x="848" y="614" width="6" height="1" fill="#0000f0"/><rect x="858" y="614" width="6" height="1" fill="#0000f0"/><rect x="868" y="614" width="6" height="1" fill="#0000f0"/><rect x="878" y="614" width="6" height="1" fill="#0000f0"/><rect x="888" y="614" width="6" height="1" fill="#0000f0"/><rect x="898" y="614" width="6" height="1" fill="#0000f0"/><rect x="908" y="614" width="6" height="1" fill="#0000f0"/><rect x="918" y="614" width="6" height="1" fill="#0000f0"/><rect x="928" y="614" width="6" height="1" fill="#0000f0"/><rect x="938" y="614" width="6" height="1" fill="#0000f0"/><rect x="948" y="614" width="6" height="1" fill="#0000f0"/><rect x="958" y="614" width="6" height="1" fill="#0000f0"/><rect x="968" y="614" width="6" height="1" fill="#0000f0"/><rect x="978" y="614" width="6" height="1" fill="#0000f0"/><rect x="12" y="85" width="976" height="1" fill="#000"/><rect x="12" y="667" width="976" height="1" fill="#000"/><rect x="12" y="85" width="1" height="583" fill="#000"/><rect x="987" y="85" width="1" height="583" fill="#000"/><rect x="43" y="668" width="1" height="3" fill="#ff0000"/><rect x="74" y="668" width="1" height="3" fill="#ff0000"/><rect x="106" y="668" width="1" height="3" fill="#ff0000"/><rect x="137" y="668" width="1" height="3" fill="#ff0000"/><rect x="168" y="668" width="1" height="3" fill="#ff0000"/><rect x="200" y="668" width="1" height="3" fill="#ff0000"/><rect x="231" y="668" width="1" height="3" fill="#ff0000"/><rect x="262" y="668" width="1" height="3" fill="#ff0000"/><rect x="293" y="668" width="1" height="3" fill="#ff0000"/><rect x="325" y="668" width="1" height="3" fill="#ff0000"/><rect x="356" y="668" width="1" height="3" fill="#ff0000"/><rect x="387" y="668" width="1" height="3" fill="#ff0000"/><rect x="419" y="668" width="1" height="3" fill="#ff0000"/><rect x="450" y="668" width="1" height="3" fill="#ff0000"/><rect x="481" y="668" width="1" height="3" fill="#ff0000"/><rect x="513" y="668" width="1" height="3" fill="#ff0000"/><rect x="544" y="668" width="1" height="3" fill="#ff0000"/><rect x="575" y="668" width="1" height="3" fill="#ff0000"/><rect x="606" y="668" width="1" height="3" fill="#ff0000"/><rect x="638" y="668" width="1" height="3" fill="#ff0000"/><rect x="669" y="668" width="1" height="3" fill="#ff0000"/><rect x="700" y="668" width="1" height="3" fill="#ff0000"/><rect x="732" y="668" width="1" height="3" fill="#ff0000"/><rect x="763" y="668" width="1" height="3" fill="#ff0000"/><rect x="794" y="668" width="1" height="3" fill="#ff0000"/><rect x="826" y="668" width="1" height="3" fill="#ff0000"/><rect x="857" y="668" width="1" height="3" fill="#ff0000"/><rect x="888" y="668" width="1" height="3" fill="#ff0000"/><rect x="924" y="668" width="1" height="3" fill="#ff0000"/><rect x="955" y="668" width="1" height="3" fill="#ff0000"/><rect x="988" y="112" width="4" height="1" fill="#ff0000"/><rect x="988" y="133" width="4" height="1" fill="#ff0000"/><rect x="988" y="154" width="4" height="1" fill="#ff0000"/><rect x="988" y="175" width="4" height="1" fill="#ff0000"/><rect x="988" y="197" width="4" height="1" fill="#ff0000"/><rect x="988" y="218" width="4" height="1" fill="#ff0000"/><rect x="988" y="239" width="4" height="1" fill="#ff0000"/><rect x="988" y="260" width="4" height="1" fill="#ff0000"/><rect x="988" y="282" width="4" height="1" fill="#ff0000"/><rect x="988" y="303" width="4" height="1" fill="#ff0000"/><rect x="988" y="324" width="4" height="1" fill="#ff0000"/><rect x="988" y="345" width="4" height="1" fill="#ff0000"/><rect x="988" y="367" width="4" height="1" fill="#ff0000"/><rect x="988" y="388" width="4" height="1" fill="#ff0000"/><rect x="988" y="409" width="4" height="1" fill="#ff0000"/><rect x="988" y="430" width="4" height="1" fill="#ff0000"/><rect x="988" y="452" width="4" height="1" fill="#ff0000"/><rect x="988" y="473" width="4" height="1" fill="#ff0000"/><rect x="988" y="494" width="4" height="1" fill="#ff0000"/><rect x="988" y="515" width="4" height="1" fill="#ff0000"/><rect x="988" y="537" width="4" height="1" fill="#ff0000"/><rect x="988" y="558" width="4" height="1" fill="#ff0000"/><rect x="988" y="579" width="4" height="1" fill="#ff0000"/><rect x="988" y="600" width="4" height="1" fill="#ff0000"/><rect x="988" y="622" width="4" height="1" fill="#ff0000"/><rect x="988" y="643" width="4" height="1" fill="#ff0000"/><rect x="988" y="664" width="4" height="1" fill="#ff0000"/></svg>
<div class="pl" style="top:107px">1.39750</div><div class="pl" style="top:128px">1.39500</div><div class="pl" style="top:149px">1.39250</div><div class="pl" style="top:170px">1.39000</div><div class="pl" style="top:192px">1.38750</div><div class="pl" style="top:213px">1.38500</div><div class="pl" style="top:234px">1.38250</div><div class="pl" style="top:255px">1.38000</div><div class="pl" style="top:277px">1.37750</div><div class="pl" style="top:298px">1.37500</div><div class="pl" style="top:319px">1.37250</div><div class="pl" style="top:340px">1.37000</div><div class="pl" style="top:362px">1.36750</div><div class="pl" style="top:383px">1.36500</div><div class="pl" style="top:404px">1.36250</div><div class="pl" style="top:425px">1.36000</div><div class="pl" style="top:447px">1.35750</div><div class="pl" style="top:468px">1.35500</div><div class="pl" style="top:489px">1.35250</div><div class="pl" style="top:510px">1.35000</div><div class="pl" style="top:532px">1.34750</div><div class="pl" style="top:553px">1.34500</div><div class="pl" style="top:574px">1.34250</div><div class="pl" style="top:595px">1.34000</div><div class="pl" style="top:617px">1.33750</div><div class="pl" style="top:638px">1.33500</div><div class="pl" style="top:659px">1.33250</div><div class="dl" style="left:22px">03</div><div class="dl" style="left:53px">10</div><div class="dl" style="left:85px">17</div><div class="dl" style="left:116px">24</div><div class="dl" style="left:147px">03</div><div class="dl" style="left:179px">10</div><div class="dl" style="left:210px">17</div><div class="dl" style="left:241px">24</div><div class="dl" style="left:272px">31</div><div class="dl" style="left:304px">07</div><div class="dl" style="left:335px">14</div><div class="dl" style="left:366px">21</div><div class="dl" style="left:398px">28</div><div class="dl" style="left:429px">05</div><div class="dl" style="left:460px">12</div><div class="dl" style="left:492px">19</div><div class="dl" style="left:523px">26</div><div class="dl" style="left:554px">02</div><div class="dl" style="left:585px">09</div><div class="dl" style="left:617px">16</div><div class="dl" style="left:648px">23</div><div class="dl" style="left:679px">30</div><div class="dl" style="left:711px">07</div><div class="dl" style="left:742px">14</div><div class="dl" style="left:773px">21</div><div class="dl" style="left:805px">28</div><div class="dl" style="left:836px">04</div><div class="dl" style="left:867px">11</div><div class="dl" style="left:903px">18</div><div class="dl" style="left:934px">25</div><div class="ml" style="left:2px">Feb/03/14</div><div class="ml" style="left:127px">Mar/03</div><div class="ml" style="left:284px">Apr/07</div><div class="ml" style="left:409px">May/05</div><div class="ml" style="left:534px">Jun/02</div><div class="ml" style="left:691px">Jul/07</div><div class="ml" style="left:816px">Aug/04</div>
<div id="hl">1.35003</div>
<div id="lp">1.33838</div>
<div id="sq"></div>
<div class="ssep" style="left:26px"></div>
<div id="search"><span>Search for instrument</span></div>
<div class="ssep" style="left:198px"></div>
<div id="date">11 Aug 2014 16:57:08 EDT</div>
<svg id="icons" width="1049" height="741" viewBox="0 0 1049 741" style="position:absolute;left:0;top:0">
<!-- app icon dots -->
<rect x="15" y="8" width="10" height="15" fill="#e8b830" opacity="0.3"/>
<rect x="10" y="8" width="1" height="1" fill="#f0c68c" opacity="0.8"/>
<rect x="12" y="8" width="1" height="1" fill="#f0c68c" opacity="0.8"/>
<rect x="14" y="8" width="1" height="1" fill="#f0c68c" opacity="0.8"/>
<rect x="16" y="8" width="1" height="1" fill="#c58ad0" opacity="0.9"/>
<rect x="18" y="8" width="1" height="1" fill="#c58ad0" opacity="0.9"/>
<rect x="20" y="8" width="1" height="1" fill="#c58ad0" opacity="0.9"/>
<rect x="22" y="8" width="1" height="1" fill="#c58ad0" opacity="0.9"/>
<rect x="24" y="8" width="1" height="1" fill="#6a4a30" opacity="0.7"/>
<rect x="26" y="8" width="1" height="1" fill="#f0c890" opacity="0.7"/>
<rect x="28" y="8" width="1" height="1" fill="#f0c890" opacity="0.7"/>
<rect x="30" y="8" width="1" height="1" fill="#f0c890" opacity="0.7"/>
<rect x="10" y="10" width="1" height="1" fill="#f0c68c" opacity="0.8"/>
<rect x="12" y="10" width="1" height="1" fill="#f0c68c" opacity="0.8"/>
<rect x="14" y="10" width="1" height="1" fill="#f0c68c" opacity="0.8"/>
<rect x="16" y="10" width="1" height="1" fill="#c58ad0" opacity="0.9"/>
<rect x="18" y="10" width="1" height="1" fill="#c58ad0" opacity="0.9"/>
<rect x="20" y="10" width="1" height="1" fill="#c58ad0" opacity="0.9"/>
<rect x="22" y="10" width="1" height="1" fill="#c58ad0" opacity="0.9"/>
<rect x="24" y="10" width="1" height="1" fill="#6a4a30" opacity="0.7"/>
<rect x="26" y="10" width="1" height="1" fill="#f0c890" opacity="0.7"/>
<rect x="28" y="10" width="1" height="1" fill="#f0c890" opacity="0.7"/>
<rect x="30" y="10" width="1" height="1" fill="#f0c890" opacity="0.7"/>
<rect x="10" y="12" width="1" height="1" fill="#f0c68c" opacity="0.8"/>
<rect x="12" y="12" width="1" height="1" fill="#f0c68c" opacity="0.8"/>
<rect x="14" y="12" width="1" height="1" fill="#f0c68c" opacity="0.8"/>
<rect x="16" y="12" width="1" height="1" fill="#4a2040" opacity="0.9"/>
<rect x="18" y="12" width="1" height="1" fill="#4a2040" opacity="0.9"/>
<rect x="20" y="12" width="1" height="1" fill="#4a2040" opacity="0.9"/>
<rect x="22" y="12" width="1" height="1" fill="#4a2040" opacity="0.9"/>
<rect x="24" y="12" width="1" height="1" fill="#4a2040" opacity="0.9"/>
<rect x="26" y="12" width="1" height="1" fill="#f0c890" opacity="0.7"/>
<rect x="28" y="12" width="1" height="1" fill="#f0c890" opacity="0.7"/>
<rect x="30" y="12" width="1" height="1" fill="#f0c890" opacity="0.7"/>
<rect x="10" y="14" width="1" height="1" fill="#f0c68c" opacity="0.8"/>
<rect x="12" y="14" width="1" height="1" fill="#f0c68c" opacity="0.8"/>
<rect x="14" y="14" width="1" height="1" fill="#f0c68c" opacity="0.8"/>
<rect x="16" y="14" width="1" height="1" fill="#4a2040" opacity="0.9"/>
<rect x="18" y="14" width="1" height="1" fill="#4a2040" opacity="0.9"/>
<rect x="20" y="14" width="1" height="1" fill="#4a2040" opacity="0.9"/>
<rect x="22" y="14" width="1" height="1" fill="#4a2040" opacity="0.9"/>
<rect x="24" y="14" width="1" height="1" fill="#4a2040" opacity="0.9"/>
<rect x="26" y="14" width="1" height="1" fill="#f0c890" opacity="0.7"/>
<rect x="28" y="14" width="1" height="1" fill="#f0c890" opacity="0.7"/>
<rect x="30" y="14" width="1" height="1" fill="#f0c890" opacity="0.7"/>
<rect x="10" y="16" width="1" height="1" fill="#2e1426" opacity="0.95"/>
<rect x="12" y="16" width="1" height="1" fill="#2e1426" opacity="0.95"/>
<rect x="14" y="16" width="1" height="1" fill="#2e1426" opacity="0.95"/>
<rect x="16" y="16" width="1" height="1" fill="#2e1426" opacity="0.95"/>
<rect x="18" y="16" width="1" height="1" fill="#2e1426" opacity="0.95"/>
<rect x="20" y="16" width="1" height="1" fill="#2e1426" opacity="0.95"/>
<rect x="22" y="16" width="1" height="1" fill="#2e1426" opacity="0.95"/>
<rect x="24" y="16" width="1" height="1" fill="#2e1426" opacity="0.95"/>
<rect x="26" y="16" width="1" height="1" fill="#f0c890" opacity="0.7"/>
<rect x="28" y="16" width="1" height="1" fill="#f0c890" opacity="0.7"/>
<rect x="30" y="16" width="1" height="1" fill="#f0c890" opacity="0.7"/>
<rect x="10" y="18" width="1" height="1" fill="#2e1426" opacity="0.95"/>
<rect x="12" y="18" width="1" height="1" fill="#2e1426" opacity="0.95"/>
<rect x="14" y="18" width="1" height="1" fill="#2e1426" opacity="0.95"/>
<rect x="16" y="18" width="1" height="1" fill="#2e1426" opacity="0.95"/>
<rect x="18" y="18" width="1" height="1" fill="#2e1426" opacity="0.95"/>
<rect x="20" y="18" width="1" height="1" fill="#2e1426" opacity="0.95"/>
<rect x="22" y="18" width="1" height="1" fill="#2e1426" opacity="0.95"/>
<rect x="24" y="18" width="1" height="1" fill="#2e1426" opacity="0.95"/>
<rect x="26" y="18" width="1" height="1" fill="#f0c890" opacity="0.7"/>
<rect x="28" y="18" width="1" height="1" fill="#f0c890" opacity="0.7"/>
<rect x="30" y="18" width="1" height="1" fill="#f0c890" opacity="0.7"/>
<rect x="10" y="20" width="1" height="1" fill="#2e1426" opacity="0.95"/>
<rect x="12" y="20" width="1" height="1" fill="#2e1426" opacity="0.95"/>
<rect x="14" y="20" width="1" height="1" fill="#2e1426" opacity="0.95"/>
<rect x="16" y="20" width="1" height="1" fill="#2e1426" opacity="0.95"/>
<rect x="18" y="20" width="1" height="1" fill="#2e1426" opacity="0.95"/>
<rect x="20" y="20" width="1" height="1" fill="#2e1426" opacity="0.95"/>
<rect x="22" y="20" width="1" height="1" fill="#2e1426" opacity="0.95"/>
<rect x="24" y="20" width="1" height="1" fill="#2e1426" opacity="0.95"/>
<rect x="26" y="20" width="1" height="1" fill="#f0c890" opacity="0.7"/>
<rect x="28" y="20" width="1" height="1" fill="#f0c890" opacity="0.7"/>
<rect x="30" y="20" width="1" height="1" fill="#f0c890" opacity="0.7"/>
<rect x="10" y="22" width="1" height="1" fill="#f2cc96" opacity="0.8"/>
<rect x="12" y="22" width="1" height="1" fill="#f2cc96" opacity="0.8"/>
<rect x="14" y="22" width="1" height="1" fill="#f2cc96" opacity="0.8"/>
<rect x="16" y="22" width="1" height="1" fill="#f2cc96" opacity="0.8"/>
<rect x="18" y="22" width="1" height="1" fill="#f2cc96" opacity="0.8"/>
<rect x="20" y="22" width="1" height="1" fill="#f2cc96" opacity="0.8"/>
<rect x="22" y="22" width="1" height="1" fill="#f2cc96" opacity="0.8"/>
<rect x="24" y="22" width="1" height="1" fill="#f2cc96" opacity="0.8"/>
<rect x="26" y="22" width="1" height="1" fill="#f0c890" opacity="0.7"/>
<rect x="28" y="22" width="1" height="1" fill="#f0c890" opacity="0.7"/>
<rect x="30" y="22" width="1" height="1" fill="#f0c890" opacity="0.7"/>
<!-- window buttons -->
<rect x="953" y="13" width="8" height="2" fill="#1a1208"/>
<rect x="979.5" y="8" width="9" height="6.5" fill="none" stroke="#1a1208" stroke-width="1"/>
<rect x="979" y="7" width="10" height="2" fill="#1a1208"/>
<path d="M1016.3 7.8 L1023.3 14.8 M1023.3 7.8 L1016.3 14.8" stroke="#fff" stroke-width="1.7" fill="none"/>
<!-- candle icon -->
<rect x="37" y="52.5" width="1" height="14.5" fill="#c83060"/>
<rect x="36" y="56" width="3" height="8" fill="#ff6600"/>
<rect x="41.3" y="53.5" width="2.4" height="10.5" fill="#7a9bc6"/>
<rect x="45" y="53.5" width="2.4" height="8.5" fill="#a3bfe2"/>
<!-- OHLC icon -->
<g fill="#000">
<rect x="57.6" y="53.3" width="1.8" height="12.2"/><rect x="56" y="55.8" width="2" height="1.4"/><rect x="59" y="59.5" width="1.5" height="1.3"/>
<rect x="62.6" y="52.5" width="1.8" height="13"/><rect x="60.8" y="54" width="2" height="1.4"/><rect x="64" y="63" width="2.3" height="1.4"/>
</g>
<!-- line icon -->
<path d="M75 61.6 L79.8 58.7 L83.1 61.9 L88.9 56.1" stroke="#4468a8" stroke-width="1.5" fill="none" stroke-linejoin="round"/>
<!-- crosshair -->
<rect x="385.2" y="53" width="1.6" height="13.5" fill="#000"/><rect x="381" y="60.5" width="14" height="1.6" fill="#000"/>
<!-- grid # -->
<g fill="#000"><rect x="404.8" y="54" width="1.8" height="12.5"/><rect x="411.4" y="54" width="1.8" height="12.5"/><rect x="402.3" y="57" width="13.7" height="1.8"/><rect x="402.3" y="62.3" width="13.7" height="1.8"/></g>
<!-- i -->
<g fill="#111"><rect x="429.3" y="54.8" width="1.8" height="1.7"/><rect x="427.6" y="57.8" width="3.5" height="1.2"/><rect x="429.3" y="57.8" width="1.8" height="6"/><rect x="427" y="63.4" width="6.4" height="1.3"/></g>
<!-- arrows -->
<path d="M444.5 59.7 L448 56.8 L448 62.6 Z M457.6 59.7 L454 56.8 L454 62.6 Z" fill="#000"/>
<rect x="450" y="59" width="1" height="1" fill="#999"/><rect x="452" y="60" width="1" height="1" fill="#999"/>
<!-- vol -->
<text x="466" y="60.3" font-family="Liberation Sans, sans-serif" font-size="10" font-weight="normal" fill="#000" textLength="12.5" lengthAdjust="spacingAndGlyphs">vol</text>
<path d="M466.5 65.2 L466.5 63 L468 63 L468 62 L469.5 62 L469.5 63 L471 63 L471 61.8 L472.5 61.8 L472.5 63 L474 63 L474 61.5 L475.5 61.5 L475.5 62.5 L477 62.5 L477 61.5 L478.4 61.5 L478.4 65.2 Z" fill="#2b4fa2"/>
<!-- study icon 1 -->
<rect x="493.8" y="54" width="1.8" height="12.3" fill="#000"/><rect x="492" y="55.6" width="2" height="1.3" fill="#000"/>
<path d="M495.8 63.3 L505.5 57.3" stroke="#222" stroke-width="1" fill="none"/>
<!-- study icon 2 -->
<rect x="514.7" y="54" width="1.8" height="12.3" fill="#000"/><rect x="516.3" y="62.8" width="2" height="1.3" fill="#000"/>
<path d="M517.6 55.6 L527 60.8" stroke="#222" stroke-width="1" fill="none"/>
<!-- ## icon -->
<g fill="#000"><rect x="536.2" y="54" width="1.8" height="12.3"/><rect x="544.2" y="54" width="1.8" height="12.3"/><rect x="534" y="57.6" width="14.2" height="1.5"/><rect x="538" y="62.3" width="2.2" height="1.4"/><rect x="546" y="62.3" width="2.2" height="1.4"/></g>
<!-- arrow icon -->
<path d="M555 54.8 L563 59.3" stroke="#222" stroke-width="1.1" fill="none"/>
<path d="M565.2 57 L566 62 L563.5 61.5 L561.2 65.5 L560 64.8 L562 61 L559.8 60.2 Z" fill="#000"/>
<!-- lines icon -->
<path d="M581.3 61.4 L595 55.1" stroke="#555" stroke-width="1.2" fill="none"/>
<path d="M584 65.3 L595.3 59.5" stroke="#a0a0a0" stroke-width="1.2" fill="none"/>
<!-- orange X -->
<path d="M605.6 55.1 L614.7 64.2 M614.7 55.1 L605.6 64.2" stroke="#ff6a00" stroke-width="3" fill="none"/>
<!-- x all -->
<path d="M625 53.2 L629 57.8 M629 53.2 L625 57.8" stroke="#ff6a00" stroke-width="1.6" fill="none"/>
<text x="628.3" y="65.9" font-family="Liberation Sans, sans-serif" font-size="9.5" font-weight="bold" fill="#000" textLength="9.3" lengthAdjust="spacingAndGlyphs">all</text>
<!-- printer -->
<rect x="654.6" y="55.4" width="5.8" height="4.8" fill="#fff" stroke="#000" stroke-width="1.3"/>
<rect x="656" y="57.2" width="3" height="1" fill="#000"/>
<rect x="652.4" y="59.6" width="10.4" height="3.8" fill="#fff" stroke="#000" stroke-width="1.3"/>
<rect x="653" y="64.3" width="10.5" height="1.2" fill="#b8cdea"/>
<!-- print preview -->
<path d="M674.8 54.3 L678.6 54.3 L680.6 56.3 L680.6 57.5 M674.8 54.3 L674.8 66.3 L681 66.3" stroke="#777" stroke-width="1" fill="none"/>
<circle cx="679.9" cy="61.2" r="2.9" fill="#fff" stroke="#222" stroke-width="1.2"/>
<path d="M682 63.4 L685.6 66.4" stroke="#222" stroke-width="1.6" fill="none"/>
<!-- zoom + -->
<circle cx="706.5" cy="57.8" r="2.9" fill="#f4f4f4" stroke="#222" stroke-width="1.2"/>
<path d="M708.7 60 L712.4 63.4" stroke="#222" stroke-width="1.6" fill="none"/>
<path d="M699.8 63.6 L704.6 63.6 M702.2 61.2 L702.2 66" stroke="#ff6a00" stroke-width="1.2" fill="none"/>
<!-- zoom - -->
<circle cx="727.5" cy="57.8" r="2.9" fill="#f4f4f4" stroke="#222" stroke-width="1.2"/>
<path d="M729.7 60 L733.6 63.4" stroke="#222" stroke-width="1.6" fill="none"/>
<path d="M720.8 63.4 L726.4 63.4" stroke="#4b78c8" stroke-width="1.2" fill="none"/>
<!-- fit -->
<rect x="740.8" y="54.3" width="14.4" height="1.6" fill="#666"/><rect x="740.8" y="65.2" width="14.4" height="1.6" fill="#666"/>
<path d="M745.6 59.8 L747.9 57 L750.2 59.8 Z M745.6 61.4 L747.9 64.2 L750.2 61.4 Z" fill="#8a8a8a"/>
<!-- right button glyph -->
<path d="M1008.6 55.8 L1013.8 59.3 L1008.6 62.8 Z M1014.6 55.8 L1014.6 62.8 L1011 59.3 Z" fill="#f2f2f2" stroke="#9a9a9a" stroke-width="0.8"/>
<circle cx="39.7" cy="717.3" r="3" fill="none" stroke="#333" stroke-width="1.1"/>
<path d="M37.6 719.6 L33.6 723.2" stroke="#333" stroke-width="1.5" fill="none"/>
<rect x="40" y="724" width="1" height="1" fill="#111"/><rect x="42" y="724" width="1" height="1" fill="#111"/><rect x="44" y="724" width="1" height="1" fill="#111"/>
</svg>

</div>
</body></html>
